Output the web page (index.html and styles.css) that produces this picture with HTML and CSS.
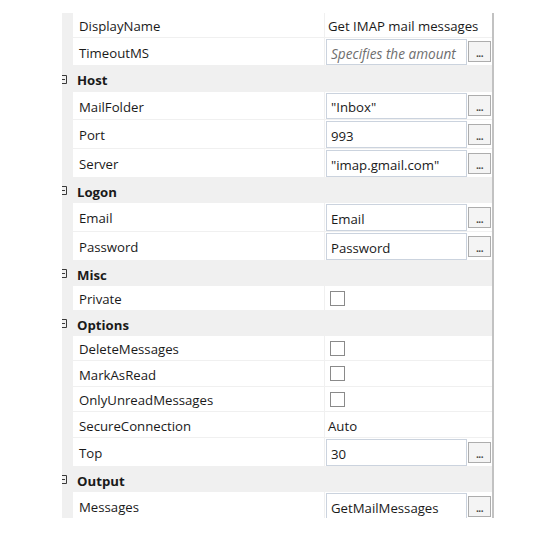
FILE: index.html
```html
<!DOCTYPE html>
<html>
<head>
<meta charset="utf-8">
<link rel="stylesheet" href="styles.css">
</head>
<body>
<div class="grid">
  <div class="row h25"><div class="gut"></div><div class="name">DisplayName</div><div class="val"><span class="txt">Get IMAP mail messages</span></div></div>
  <div class="row h28"><div class="gut"></div><div class="name">TimeoutMS</div><div class="val"><div class="box ph"><span>Specifies the amount</span></div><div class="btn">...</div></div></div>
  <div class="cat h26"><svg class="exp" width="5" height="9" viewBox="0 0 5 9"><path d="M0 0.5H4.5V8.5H0M0 4.5H3" fill="none" stroke="#3a3a3a" stroke-width="1"/></svg><span>Host</span></div>
  <div class="row h28"><div class="gut"></div><div class="name">MailFolder</div><div class="val"><div class="box">"Inbox"</div><div class="btn">...</div></div></div>
  <div class="row h29"><div class="gut"></div><div class="name">Port</div><div class="val"><div class="box">993</div><div class="btn">...</div></div></div>
  <div class="row h29"><div class="gut"></div><div class="name">Server</div><div class="val"><div class="box">"imap.gmail.com"</div><div class="btn">...</div></div></div>
  <div class="cat h25"><svg class="exp" width="5" height="9" viewBox="0 0 5 9"><path d="M0 0.5H4.5V8.5H0M0 4.5H3" fill="none" stroke="#3a3a3a" stroke-width="1"/></svg><span>Logon</span></div>
  <div class="row h29"><div class="gut"></div><div class="name">Email</div><div class="val"><div class="box">Email</div><div class="btn">...</div></div></div>
  <div class="row h29"><div class="gut"></div><div class="name">Password</div><div class="val"><div class="box">Password</div><div class="btn">...</div></div></div>
  <div class="cat h25"><svg class="exp" width="5" height="9" viewBox="0 0 5 9"><path d="M0 0.5H4.5V8.5H0M0 4.5H3" fill="none" stroke="#3a3a3a" stroke-width="1"/></svg><span>Misc</span></div>
  <div class="row h25"><div class="gut"></div><div class="name">Private</div><div class="val"><span class="chk"></span></div></div>
  <div class="cat h25"><svg class="exp" width="5" height="9" viewBox="0 0 5 9"><path d="M0 0.5H4.5V8.5H0M0 4.5H3" fill="none" stroke="#3a3a3a" stroke-width="1"/></svg><span>Options</span></div>
  <div class="row h25"><div class="gut"></div><div class="name">DeleteMessages</div><div class="val"><span class="chk"></span></div></div>
  <div class="row h26"><div class="gut"></div><div class="name">MarkAsRead</div><div class="val"><span class="chk"></span></div></div>
  <div class="row h25"><div class="gut"></div><div class="name">OnlyUnreadMessages</div><div class="val"><span class="chk"></span></div></div>
  <div class="row h26"><div class="gut"></div><div class="name">SecureConnection</div><div class="val"><span class="txt">Auto</span></div></div>
  <div class="row h29"><div class="gut"></div><div class="name">Top</div><div class="val"><div class="box">30</div><div class="btn">...</div></div></div>
  <div class="cat h25"><svg class="exp" width="5" height="9" viewBox="0 0 5 9"><path d="M0 0.5H4.5V8.5H0M0 4.5H3" fill="none" stroke="#3a3a3a" stroke-width="1"/></svg><span>Output</span></div>
  <div class="row h29"><div class="gut"></div><div class="name">Messages</div><div class="val"><div class="box">GetMailMessages</div><div class="btn">...</div></div></div>
</div>
</body>
</html>
```

FILE: styles.css
```css
html, body {
  margin: 0;
  padding: 0;
  background: #ffffff;
}
body {
  font-family: "Segoe UI", "Open Sans", "Noto Sans", sans-serif;
  font-size: 13.2px;
  color: #1a1a1a;
}
.grid {
  margin: 13px 0 0 62px;
  width: 430px;
  height: 505px;
  overflow: hidden;
  background: #f0f0f0;
  border-right: 2px solid #c2c2c2;
  display: flex;
  flex-direction: column;
}
.row {
  flex: none;
  display: grid;
  grid-template-columns: 10px 251px 167px;
  column-gap: 1px;
  padding-bottom: 1px;
  box-sizing: border-box;
}
.h25 { height: 25px; }
.h26 { height: 26px; }
.h28 { height: 28px; }
.h29 { height: 29px; }
.gut { background: #f0f0f0; }
.name {
  background: #ffffff;
  display: flex;
  align-items: center;
  padding: 2px 0 0 6px;
  white-space: nowrap;
  overflow: hidden;
}
.val {
  background: #ffffff;
  display: flex;
  align-items: center;
  min-width: 0;
  overflow: hidden;
}
.txt {
  padding: 2px 0 0 3px;
  white-space: nowrap;
}
.box {
  box-sizing: border-box;
  align-self: stretch;
  margin: 1px 0 0 1px;
  width: 141px;
  flex: none;
  border: 1px solid #cbd3de;
  background: #ffffff;
  padding: 2px 0 0 4px;
  display: flex;
  align-items: center;
  white-space: nowrap;
  overflow: hidden;
}
.box.ph {
  font-style: italic;
  color: #6e6e6e;
  font-size: 13.6px;
}
.btn {
  flex: none;
  box-sizing: border-box;
  width: 23px;
  height: 21px;
  margin-left: 1px;
  border: 1px solid #adadad;
  background: #f4f4f4;
  font-size: 10px;
  font-weight: bold;
  line-height: 22px;
  text-align: center;
  color: #444;
  letter-spacing: -0.5px;
  overflow: hidden;
}
.chk {
  box-sizing: border-box;
  width: 15px;
  height: 15px;
  margin-left: 5px;
  border: 1.5px solid #8a8a8a;
  background: #fff;
}
.cat {
  flex: none;
  box-sizing: border-box;
  display: flex;
  align-items: center;
  background: #f0f0f0;
  font-weight: bold;
  padding-top: 2px;
}
.cat .exp {
  flex: none;
  margin: -2px 10px 0 0;
}
```
